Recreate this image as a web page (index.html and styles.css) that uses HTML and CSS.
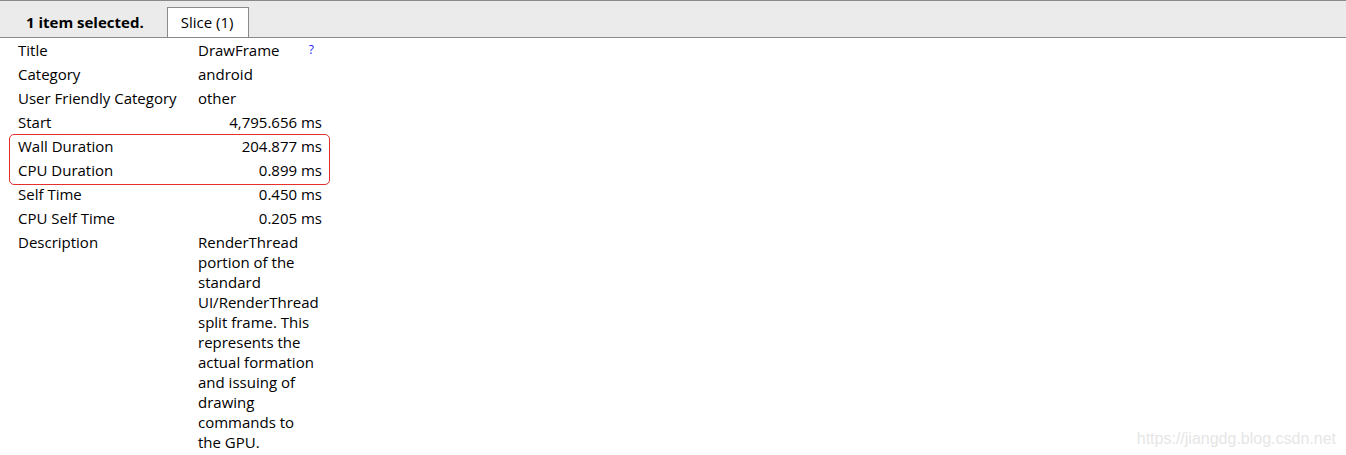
FILE: index.html
```html
<!DOCTYPE html>
<html>
<head>
<meta charset="utf-8">
<link rel="stylesheet" href="styles.css">
</head>
<body>
<div class="header">
  <div class="summary">1 item selected.</div>
  <div class="tab">Slice (1)</div>
</div>
<div class="content">
  <table class="props">
    <tr><td class="k">Title</td><td class="v"><div class="title-cell"><span>DrawFrame</span><span class="help">?</span></div></td></tr>
    <tr><td class="k">Category</td><td class="v">android</td></tr>
    <tr><td class="k">User Friendly Category</td><td class="v">other</td></tr>
    <tr><td class="k">Start</td><td class="v num">4,795.656 ms</td></tr>
    <tr><td class="k">Wall Duration</td><td class="v num">204.877 ms</td></tr>
    <tr><td class="k">CPU Duration</td><td class="v num">0.899 ms</td></tr>
    <tr><td class="k">Self Time</td><td class="v num">0.450 ms</td></tr>
    <tr><td class="k">CPU Self Time</td><td class="v num">0.205 ms</td></tr>
    <tr><td class="k">Description</td><td class="v"><div class="desc">RenderThread portion of the standard UI/RenderThread split frame. This represents the actual formation and issuing of drawing commands to the GPU.</div></td></tr>
  </table>
  <div class="highlight"></div>
</div>
<div class="watermark">https://jiangdg.blog.csdn.net</div>
</body>
</html>
```
FILE: styles.css
```css
html, body {
  margin: 0;
  padding: 0;
  background: #ffffff;
  width: 1346px;
  height: 455px;
  overflow: hidden;
  position: relative;
  font-family: "Open Sans", "Noto Sans", sans-serif;
  font-size: 15px;
  color: #000;
}
.header {
  display: flex;
  align-items: flex-end;
  height: 36px;
  background: #ebebeb;
  border-top: 1px solid #8a8a8a;
  border-bottom: 1px solid #8a8a8a;
}
.summary {
  font-weight: bold;
  padding: 0 24px 0 26px;
  height: 30px;
  line-height: 30px;
}
.tab {
  background: #fff;
  border: 1px solid #8a8a8a;
  border-bottom: none;
  height: 29px;
  line-height: 29px;
  padding: 0 15px 0 13px;
  margin-left: -1px;
}
.content {
  position: relative;
}
.props {
  border-collapse: collapse;
  margin-left: 14px;
}
.props td {
  padding: 2px 4px;
  line-height: 20px;
  vertical-align: top;
}
.props td.k {
  width: 172px;
}
.props td.v {
  width: 124px;
  padding-right: 4px;
}
.props td.num {
  text-align: right;
}
.desc {
  max-width: 122px;
}
.title-cell {
  display: flex;
  justify-content: space-between;
}
.help {
  color: #1a1aff;
  font-size: 12px;
  padding-right: 8px;
}
.highlight {
  position: absolute;
  left: 9px;
  top: 96px;
  width: 319px;
  height: 49px;
  border: 1px solid #e53030;
  border-radius: 5px;
}
.watermark {
  position: absolute;
  right: 10px;
  bottom: 7px;
  font-family: "Liberation Sans", Arial, sans-serif;
  font-size: 16px;
  color: #e6e6e6;
}
```
